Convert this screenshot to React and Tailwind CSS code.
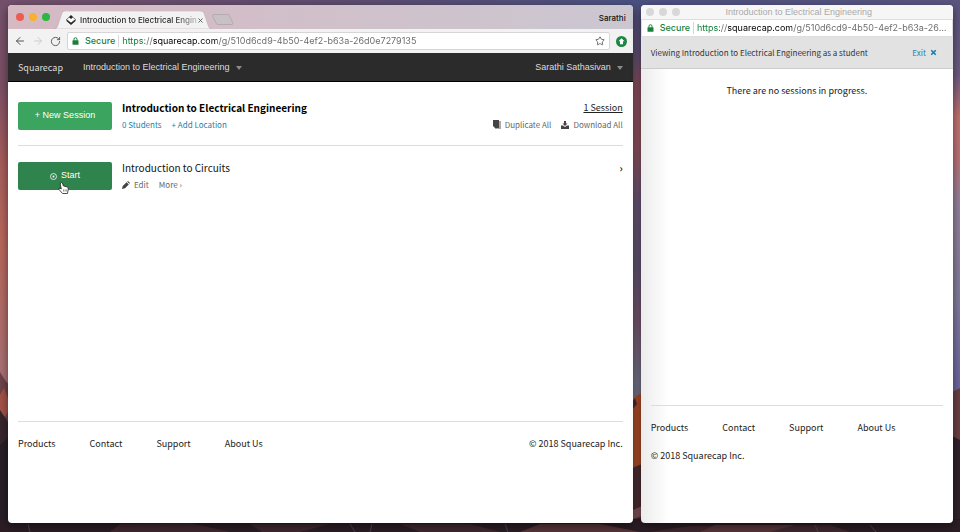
import React from 'react';
import { Star, ArrowLeft, ArrowRight, RotateCw, X } from 'lucide-react';

const SESSION_URL = 'https://squarecap.com/g/510d6cd9-4b50-4ef2-b63a-26d0e7279135';
const FOOTER_LINKS = ['Products', 'Contact', 'Support', 'About Us'];

// Desktop picture behind both windows
const Wallpaper = () => (
  <svg className="absolute inset-0 h-full w-full" viewBox="0 0 960 532" preserveAspectRatio="none" aria-hidden="true">
    <defs>
      <linearGradient id="skyLeft" x1="0" y1="0" x2="0" y2="1">
        <stop offset="0" stopColor="#74506c" />
        <stop offset="0.16" stopColor="#7c4f66" />
        <stop offset="0.3" stopColor="#a55c5c" />
        <stop offset="0.45" stopColor="#b8675a" />
        <stop offset="0.6" stopColor="#b06c68" />
        <stop offset="0.75" stopColor="#a8737c" />
      </linearGradient>
      <linearGradient id="skyMid" x1="0" y1="0" x2="0" y2="1">
        <stop offset="0" stopColor="#505280" />
        <stop offset="0.1" stopColor="#5f4f75" />
        <stop offset="0.16" stopColor="#8b4f5f" />
        <stop offset="0.28" stopColor="#8f5260" />
        <stop offset="0.38" stopColor="#6b5478" />
        <stop offset="0.5" stopColor="#625474" />
        <stop offset="0.6" stopColor="#775670" />
        <stop offset="0.72" stopColor="#75748a" />
      </linearGradient>
      <linearGradient id="skyRight" x1="0" y1="0" x2="0" y2="1">
        <stop offset="0" stopColor="#5a5580" />
        <stop offset="0.14" stopColor="#6c5a82" />
        <stop offset="0.22" stopColor="#c4716d" />
        <stop offset="0.3" stopColor="#bb7276" />
        <stop offset="0.38" stopColor="#94809c" />
        <stop offset="0.55" stopColor="#827c9c" />
        <stop offset="0.72" stopColor="#6c66a0" />
      </linearGradient>
      <linearGradient id="topBand" x1="0" y1="0" x2="1" y2="0">
        <stop offset="0" stopColor="#74506c" />
        <stop offset="0.35" stopColor="#5f4c70" />
        <stop offset="0.65" stopColor="#4b5180" />
        <stop offset="1" stopColor="#5a5580" />
      </linearGradient>
    </defs>
    <rect width="320" height="532" fill="url(#skyLeft)" />
    <rect x="320" width="480" height="532" fill="url(#skyMid)" />
    <rect x="800" width="160" height="532" fill="url(#skyRight)" />
    <rect width="960" height="7" fill="url(#topBand)" />
    <path d="M0 372L5 380L10 386L10 532H0Z" fill="#6c4348" />
    <path d="M0 395L4 388L8 398L8 412L3 420L0 416Z" fill="#a45246" />
    <path d="M0 410L8 422V532H0Z" fill="#37252d" />
    <path d="M0 445L8 438V532H0Z" fill="#291e27" />
    <path d="M632 402L636 396L642 393V532H632Z" fill="#b04c28" />
    <path d="M632 402L635 398L637 404L632 410Z" fill="#4f2a2c" />
    <path d="M632 468L642 464V532H632Z" fill="#4a2c31" />
    <path d="M633 510L642 506V516L633 519Z" fill="#80535a" />
    <path d="M952 392L960 388V532H952Z" fill="#6b3f43" />
    <path d="M952 436L960 440V532H952Z" fill="#30222c" />
    <path d="M0 519H960V532H0Z" fill="#2c1d25" />
    <path d="M120 524L190 523L230 532H110ZM250 524L330 524L300 532H262ZM400 524L470 524L500 532H420ZM690 526L830 525L850 532H650Z" fill="#40282f" />
    <path d="M540 524L600 524L640 532H520ZM715 525H795L770 532H700Z" fill="#573539" />
    <path d="M350 524L355 532M372 524L370 532M505 524L508 532M815 525L818 532M870 525L876 532M28 524L30 532" stroke="#4b4350" />
  </svg>
);

const UrlField = ({ label }) => (
  <div className="flex min-w-0 grow items-center text-[9px] font-['Inter',sans-serif]">
    <svg className="mr-1.5 shrink-0" width="7" height="8" viewBox="0 0 7 8" aria-hidden="true">
      <path d="M2 3.500V2.200Q2 0.700 3.500 0.700Q5 0.700 5 2.200V3.500" fill="none" stroke="#1b7f3c" />
      <rect x="0.500" y="3.200" width="6" height="4.600" rx="0.500" fill="#1b7f3c" />
    </svg>
    <span className="font-medium text-[#1b7f3c]">Secure</span>
    <span className="mx-[3px] h-3 w-px bg-[#d9d9d9]" />
    <input
      type="text"
      aria-label={label}
      defaultValue={SESSION_URL}
      className="min-w-0 grow text-ellipsis bg-[linear-gradient(90deg,#0b7a30_23px,#666_23px,#666_31px,#000_31px,#000_95px,#666_95px)] bg-clip-text text-transparent outline-none"
    />
  </div>
);

const Caret = () => (
  <svg width="6" height="4" viewBox="0 0 6 4" aria-hidden="true">
    <path d="M0 0H6L3 4Z" fill="#8a8a8a" />
  </svg>
);

const FooterLinks = () => (
  <nav aria-label="Footer" className="flex gap-[34px]">
    {FOOTER_LINKS.map((name) => (
      <a key={name} href="#">{name}</a>
    ))}
  </nav>
);

const BrowserTabs = () => (
  <div className="flex h-6 items-end bg-linear-to-r from-[#d5b9c3] to-[#cbc7d1] pl-2 pr-[7px]">
    <div className="flex gap-[5px] pb-2">
      <span className="size-2 rounded-full bg-[#ee5b52]" />
      <span className="size-2 rounded-full bg-[#f6b12f]" />
      <span className="size-2 rounded-full bg-[#2bb741]" />
    </div>
    <div className="relative ml-1 flex h-[18px] w-[158px] items-center pl-3 pr-[10px]">
      <svg className="absolute inset-0 h-full w-full" viewBox="0 0 158 18" preserveAspectRatio="none" aria-hidden="true">
        <path d="M0 18C3 18 3 16 4 14L8 2Q9 0 11 0H146Q149 0 150 2L154 14C155 16 155 18 158 18Z" fill="#f3f2f3" stroke="#b8a6ae" strokeWidth="0.5" />
      </svg>
      <svg className="relative shrink-0" width="10" height="10" viewBox="0 0 10 10" aria-hidden="true">
        <path d="M5 0.500L9.500 4.500L5 8L0.500 4.500Z" fill="#fff" stroke="#444" strokeWidth="0.7" />
        <path d="M5 0.200L7 2.200L5 4L3 2.200Z" fill="#222" />
        <path d="M0.500 4.500L5 8L9.500 4.500V6L5 10L0.500 6Z" fill="#222" />
      </svg>
      <span className="relative ml-1 whitespace-nowrap bg-linear-to-r from-[#222] from-80% to-[#bbb] bg-clip-text text-[8px] font-medium leading-4 text-transparent font-['Inter',sans-serif]">
        Introduction to Electrical Engin
      </span>
      <button aria-label="Close tab" className="relative ml-auto">
        <X size={7} strokeWidth={3} className="text-[#555]" />
      </button>
    </div>
    <svg className="mb-1 shrink-0" width="22" height="11" viewBox="0 0 22 11" aria-hidden="true">
      <path d="M1 0.500H16Q17 0.500 17.500 2L21 9Q21 10.500 20 10.500H6Q4.500 10.500 4 9L0.500 2Z" fill="#c7c0c5" stroke="#b5aab1" />
    </svg>
    <button className="ml-auto pb-[3px] text-[8px] font-medium leading-4 text-[#111] font-['Inter',sans-serif]">Sarathi</button>
  </div>
);

const Toolbar = () => (
  <div className="flex h-6 items-center bg-[#f2f2f2] pl-1.5 pr-1.5 text-[#555]">
    <button aria-label="Back"><ArrowLeft size={12} /></button>
    <button aria-label="Forward" className="ml-1.5 text-[#ccc]"><ArrowRight size={12} /></button>
    <button aria-label="Reload" className="ml-1.5"><RotateCw size={11} /></button>
    <div className="ml-1.5 flex h-[18px] min-w-0 grow items-center rounded-xs border border-[#d6d6d6] bg-white px-1">
      <UrlField label="Address" />
      <button aria-label="Bookmark this page"><Star size={10} /></button>
    </div>
    <button aria-label="Extension" className="ml-1.5">
      <svg width="11" height="11" viewBox="0 0 11 11" aria-hidden="true">
        <circle cx="5.500" cy="5.500" r="5.500" fill="#1d8743" />
        <path d="M5.500 2.200L8.500 5.300H7V8.300H4V5.300H2.500Z" fill="#fff" />
      </svg>
    </button>
  </div>
);

const InstructorWindow = () => (
  <section className="flex min-w-0 flex-2 flex-col overflow-hidden rounded bg-white shadow-[0_3px_10px_rgba(0,0,0,0.5)]">
    <BrowserTabs />
    <Toolbar />
    <header className="flex h-[29px] items-center border-b border-black bg-[#2b2b2b] px-[10px] pt-0.5 text-[9px] text-[#ddd] font-['Liberation_Sans',sans-serif]">
      <a href="#" className="font-['Noto_Sans_CJK_SC',sans-serif]">Squarecap</a>
      <button className="ml-5 flex items-center gap-1.5">Introduction to Electrical Engineering <Caret /></button>
      <button className="ml-auto flex items-center gap-1.5">Sarathi Sathasivan <Caret /></button>
    </header>

    <main className="grow px-[10px]">
      <div className="flex h-16 items-center border-b border-[#ddd] pt-1">
        <button className="h-7 w-[94px] rounded-xs bg-[#3ba55f] text-[9px] text-white font-['Liberation_Sans',sans-serif]">+ New Session</button>
        <div className="ml-[10px]">
          <h1 className="text-[10px] font-bold leading-[18px] text-black">Introduction to Electrical Engineering</h1>
          <p className="flex gap-[10px] text-[8px] leading-4 text-[#2480a8]">
            <a href="#">0 Students</a>
            <a href="#">+ Add Location</a>
          </p>
        </div>
        <div className="ml-auto flex flex-col items-end">
          <a href="#" className="text-[9px] leading-[18px] underline">1 Session</a>
          <p className="flex gap-[10px] text-[8px] leading-4 text-[#666]">
            <button className="flex items-center gap-1">
              <svg width="8" height="9" viewBox="0 0 8 9" aria-hidden="true">
                <path d="M2 1H8V9H2Z" fill="#aaa" />
                <path d="M0 0H6V8H2L0 6Z" fill="#444" />
              </svg>
              Duplicate All
            </button>
            <button className="flex items-center gap-1">
              <svg width="8" height="8" viewBox="0 0 8 8" aria-hidden="true">
                <path d="M3 0H5V2.500H6.500L4 5L1.500 2.500H3Z" fill="#444" />
                <path d="M0 4.500H2L4 6L6 4.500H8V8H0Z" fill="#444" />
              </svg>
              Download All
            </button>
          </p>
        </div>
      </div>

      <div className="flex items-center pt-[13px]">
        <button className="relative flex h-7 w-[94px] items-center justify-center gap-1 rounded-xs bg-[#2f834c] text-[9px] text-white font-['Liberation_Sans',sans-serif]">
          <svg width="7" height="7" viewBox="0 0 7 7" aria-hidden="true">
            <circle cx="3.500" cy="3.500" r="3" fill="none" stroke="#fff" strokeWidth="0.8" />
            <circle cx="3.500" cy="3.500" r="1" fill="#fff" />
          </svg>
          Start
          {/* Hand pointer */}
          <svg className="absolute left-10 top-5" width="11" height="12" viewBox="0 0 11 12" aria-hidden="true">
            <path d="M2.500 1Q3.500 0 4.300 1L5.500 4L9 4.800Q10.500 5.300 10.300 7L9.500 11.500H4.500L1 7.500Q0.300 6 2 6.200L3.300 7L2.200 2Z" fill="#fff" stroke="#222" strokeWidth="0.8" />
            <path d="M5.500 7.500V9.500M7 7.500V9.500M8.400 7.500V9.500" stroke="#222" strokeWidth="0.5" />
          </svg>
        </button>
        <div className="ml-[10px]">
          <h2 className="text-[10px] leading-[18px] text-[#111]">Introduction to Circuits</h2>
          <p className="flex gap-[10px] text-[8px] leading-4 text-[#666]">
            <button className="flex items-center gap-1">
              <svg width="8" height="8" viewBox="0 0 8 8" aria-hidden="true">
                <path d="M0 8L0.700 5L4.600 1.200L6.800 3.400L3 7.300ZM5.200 0.700L6 0L8 2L7.300 2.800Z" fill="#444" />
              </svg>
              Edit
            </button>
            <button>More ›</button>
          </p>
        </div>
        <a href="#" aria-label="Open Introduction to Circuits" className="mb-4 ml-auto text-[10px] font-bold leading-[18px]">›</a>
      </div>
    </main>

    <footer className="mx-[10px] flex h-[102px] justify-between border-t border-[#ddd] pt-[13px] text-[9px] leading-[18px]">
      <FooterLinks />
      <p>© 2018 Squarecap Inc.</p>
    </footer>
  </section>
);

const StudentWindow = () => (
  <section className="flex min-w-0 flex-1 flex-col overflow-hidden rounded bg-white bg-linear-to-r from-[#ececec] to-white to-[28px] shadow-[0_3px_10px_rgba(0,0,0,0.5)]">
    <div className="flex h-[14px] items-center gap-[5px] bg-[#f6f6f6] pl-[5px]">
      <span className="size-2 rounded-full bg-[#d8d8d8]" />
      <span className="size-2 rounded-full bg-[#d8d8d8]" />
      <span className="size-2 rounded-full bg-[#d8d8d8]" />
      <p className="grow pr-10 text-center text-[9px] leading-[14px] text-[#aaa] font-['Liberation_Sans',sans-serif]">Introduction to Electrical Engineering</p>
    </div>
    <div className="flex h-[18px] items-center border border-[#ddd] bg-white pl-[5px] pr-px">
      <UrlField label="Student window address" />
    </div>
    <div className="flex h-8 items-center justify-between border-b border-[#ccc] bg-[#e2e2e2] pl-[10px] pr-4 text-[8px] text-[#333]">
      <p>Viewing Introduction to Electrical Engineering as a student</p>
      <button className="flex items-center gap-1 text-[#1f7fb0]">
        Exit <X size={7} strokeWidth={6} />
      </button>
    </div>
    <main className="grow pt-[13px] text-center text-[9px] leading-[18px]">
      <p>There are no sessions in progress.</p>
    </main>
    <footer className="mx-[10px] flex h-[118px] flex-col gap-[10px] border-t border-[#ddd] pt-[13px] text-[9px] leading-[18px]">
      <FooterLinks />
      <p>© 2018 Squarecap Inc.</p>
    </footer>
  </section>
);

export default function App() {
  return (
    <div className="relative flex min-h-screen text-[#222] font-['Noto_Sans_CJK_SC',sans-serif]">
      <Wallpaper />
      <div className="relative flex grow gap-2 pb-[9px] pl-2 pr-[7px] pt-[5px]">
        <InstructorWindow />
        <StudentWindow />
      </div>
    </div>
  );
}
